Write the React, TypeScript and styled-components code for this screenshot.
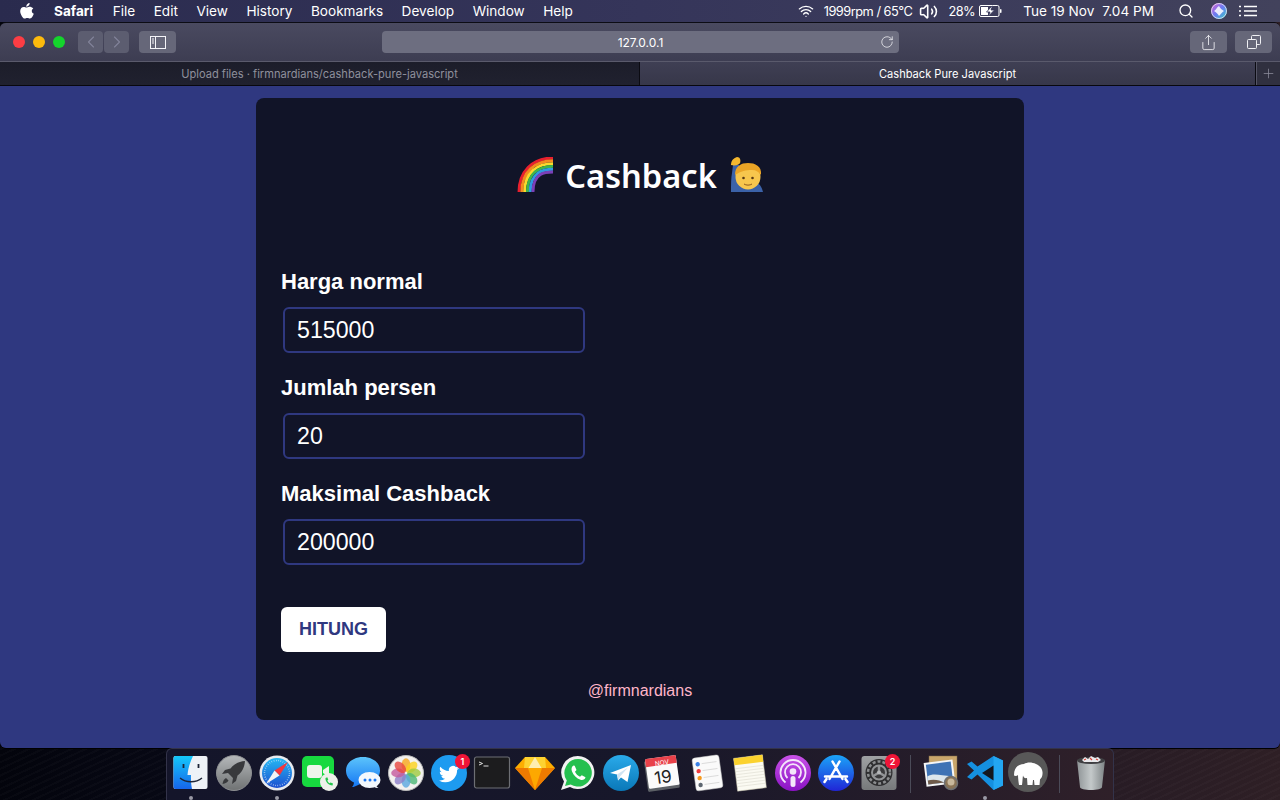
import React from "react";
import styled, { createGlobalStyle } from "styled-components";
import {
  ChevronLeft,
  ChevronRight,
  Plus,
  RotateCw,
  Search,
  Share,
  Volume2,
  Wifi,
} from "lucide-react";

const GlobalStyle = createGlobalStyle`
  html, body {
    margin: 0;
    padding: 0;
    background: #05060f;
  }
`;

const Screen = styled.div`
  width: 1280px;
  height: 800px;
  overflow: hidden;
  display: flex;
  flex-direction: column;
  font-family: Inter, "Liberation Sans", sans-serif;
  background:
    repeating-linear-gradient(155deg, rgba(255, 255, 255, 0.018) 0 2px, transparent 2px 6px),
    linear-gradient(90deg, #03040c 0%, #0b0c1c 25%, #1a1524 60%, #2e1f25 100%);
`;

const MenuBar = styled.header`
  height: 22px;
  flex: none;
  display: flex;
  align-items: center;
  justify-content: space-between;
  padding: 0 23px 0 20px;
  background: linear-gradient(90deg, #2a2b4e, #35355a 50%, #42425c);
  color: #fff;
  font-size: 13.6px;
`;

const MenuLeft = styled.nav`
  display: flex;
  align-items: center;
  gap: 18.5px;
`;

const MenuRight = styled.div`
  display: flex;
  align-items: center;
`;

const MenuItem = styled.span<{ $bold?: boolean; $left?: number }>`
  font-weight: ${({ $bold }) => ($bold ? 700 : 400)};
  margin-left: ${({ $left }) => $left ?? 0}px;
  white-space: nowrap;
`;

const StatusReading = styled(MenuItem)`
  font-size: 12.8px;
  letter-spacing: -0.5px;
`;

const AppleWrap = styled.span`
  display: flex;
  margin-right: 1.5px;
`;

const StatusSlot = styled.span<{ $left: number }>`
  display: flex;
  margin-left: ${({ $left }) => $left}px;
`;

const Window = styled.main`
  height: 726px;
  flex: none;
  display: flex;
  flex-direction: column;
  border-radius: 6px;
  overflow: hidden;
  border-top: 1px solid #0c0c14;
  box-sizing: border-box;
  box-shadow: 0 1px 0 #000;
`;

const Toolbar = styled.div`
  height: 38px;
  flex: none;
  display: flex;
  align-items: center;
  padding: 0 8px 0 13px;
  background: linear-gradient(#4a4a60, #3d3d52);
  border-bottom: 1px solid #5a5a6c;
`;

const Light = styled.span<{ $color: string }>`
  width: 12px;
  height: 12px;
  border-radius: 50%;
  background: ${({ $color }) => $color};
  margin-right: 8px;
`;

const ToolButton = styled.span<{ $width: number; $left: number }>`
  width: ${({ $width }) => $width}px;
  height: 22px;
  margin-left: ${({ $left }) => $left}px;
  flex: none;
  display: flex;
  align-items: center;
  justify-content: center;
  border-radius: 4px;
  background: #666779;
  color: #f0f0f4;
`;

const DimButton = styled(ToolButton)`
  background: #5c5d70;
  color: #83849a;
`;

const Address = styled.div`
  width: 517px;
  height: 22px;
  margin-left: 206px;
  flex: none;
  display: flex;
  align-items: center;
  justify-content: center;
  position: relative;
  border-radius: 4px;
  background: #6d6e80;
  color: #fff;
  font-size: 12px;
`;

const Reload = styled.span`
  position: absolute;
  right: 5px;
  top: 4px;
  display: flex;
  color: #f0f0f4;
`;

const TabStrip = styled.div`
  height: 24px;
  flex: none;
  display: flex;
  font-size: 11.1px;
  border-bottom: 1px solid #08080e;
  box-sizing: border-box;
`;

const Tab = styled.div<{ $active?: boolean }>`
  flex: none;
  width: ${({ $active }) => ($active ? 616 : 640)}px;
  display: flex;
  align-items: center;
  justify-content: center;
  box-sizing: border-box;
  color: ${({ $active }) => ($active ? "#fff" : "#8f909c")};
  background: ${({ $active }) => ($active ? "linear-gradient(#3f3f54, #373749)" : "linear-gradient(#1c1d2a, #20212f)")};
  border-right: 1px solid #0b0b12;
`;

const NewTab = styled.div`
  flex: 1;
  display: flex;
  align-items: center;
  justify-content: center;
  color: #8e8e9e;
  background: #30303f;
  border-left: 1px solid #555566;
`;

const Page = styled.section`
  flex: 1;
  display: flex;
  justify-content: center;
  padding-top: 12px;
  background: #2f3880;
`;

const Card = styled.div`
  width: 768px;
  height: 622px;
  box-sizing: border-box;
  padding: 49px 25px 0;
  border-radius: 8px;
  background: #111428;
  color: #fff;
  font-family: "Liberation Sans", Arial, sans-serif;
`;

const Title = styled.h1`
  margin: 0 0 64px;
  height: 56px;
  display: flex;
  align-items: center;
  justify-content: center;
  gap: 11px;
  font-family: "Noto Sans", sans-serif;
  font-size: 32.6px;
  font-weight: 600;
`;

const ManSlot = styled.span`
  display: flex;
  margin-left: 3px;
`;

const Field = styled.div`
  margin-bottom: 20px;
`;

const Label = styled.label`
  display: block;
  height: 28px;
  line-height: 30px;
  margin-bottom: 12px;
  font-size: 22px;
  font-weight: 700;
`;

const Input = styled.input`
  display: block;
  width: 302px;
  height: 46px;
  margin-left: 2px;
  padding: 0 12px;
  box-sizing: border-box;
  border: 2px solid #2f3880;
  border-radius: 6px;
  outline: none;
  background: transparent;
  color: #fff;
  font-family: "Liberation Sans", Arial, sans-serif;
  font-size: 23.2px;
`;

const SubmitButton = styled.button`
  display: block;
  width: 105px;
  height: 45px;
  margin-top: 42px;
  padding: 0;
  border: 0;
  border-radius: 6px;
  background: #fff;
  color: #2f3880;
  font-family: "Liberation Sans", Arial, sans-serif;
  font-size: 18px;
  font-weight: 700;
`;

const Credit = styled.div`
  margin-top: 29px;
  text-align: center;
  line-height: 20px;
  font-size: 16px;
  color: #ffb6c9;
`;

const DockArea = styled.footer`
  flex: 1;
  display: flex;
  justify-content: center;
`;

const Dock = styled.div`
  width: 948px;
  height: 52px;
  box-sizing: border-box;
  display: flex;
  gap: 7px;
  padding: 6px 5px 0 6px;
  border: 1px solid #33334a;
  border-bottom: 0;
  border-radius: 6px 6px 0 0;
  background: linear-gradient(90deg, #14152a, #17172a 50%, #2f2029);
`;

const DockSlot = styled.div`
  position: relative;
  width: 36px;
  height: 36px;
  flex: none;
  svg {
    display: block;
    overflow: visible;
  }
`;

const Badge = styled.span`
  position: absolute;
  top: -1px;
  right: -3px;
  width: 15px;
  height: 15px;
  border-radius: 50%;
  background: #f01437;
  color: #fff;
  font-size: 9px;
  font-weight: 600;
  line-height: 15px;
  text-align: center;
`;

const RunDot = styled.span`
  position: absolute;
  left: 16px;
  bottom: -9px;
  width: 4px;
  height: 4px;
  border-radius: 50%;
  background: #9a9aa6;
`;

const DockDivider = styled.span`
  width: 1px;
  height: 38px;
  margin: 0 6px;
  flex: none;
  background: #4b4b58;
`;

const AppleLogo = () => (
  <svg width="14" height="16" viewBox="0 0 14 16" fill="#fff">
    <path d="M9.600 0c.1 1-.3 1.900-.9 2.600-.6.700-1.500 1.200-2.400 1.100-.1-.9.300-1.900.9-2.500C7.800.500 8.800.100 9.600 0z" />
    <path d="M13.300 5.400c-.9.600-1.500 1.500-1.500 2.600 0 1.300.800 2.300 2 2.800-.3.900-.7 1.800-1.300 2.700-.7 1-1.500 2-2.600 2-1 0-1.400-.6-2.600-.6s-1.600.6-2.600.6c-1.100 0-1.900-1.100-2.700-2.100C.900 11.900.200 9.900.200 8.100c0-2.700 1.700-4.200 3.500-4.200 1.100 0 2 .7 2.700.7.700 0 1.700-.8 3-.8 1.400 0 2.900.6 3.900 1.600z" />
  </svg>
);

const BatteryIcon = () => (
  <svg width="23" height="12" viewBox="0 0 23 12" fill="none">
    <rect x="0.500" y="0.500" width="19.500" height="11" rx="1.500" stroke="#fff" />
    <rect x="2" y="2" width="7" height="8" fill="#fff" />
    <path d="M13 1 7.500 7h3.500l-1.500 4 6-6h-3.500l1.500-4z" fill="#fff" stroke="#35355a" strokeWidth="0.800" />
    <rect x="21" y="4" width="1.500" height="4" rx="0.700" fill="#fff" />
  </svg>
);

const SiriIcon = () => (
  <svg width="16" height="16" viewBox="0 0 16 16">
    <defs>
      <linearGradient id="siri" x1="0" y1="0" x2="1" y2="1">
        <stop offset="0" stopColor="#e25bd0" />
        <stop offset="0.500" stopColor="#6a7cf2" />
        <stop offset="1" stopColor="#35d0c0" />
      </linearGradient>
    </defs>
    <circle cx="8" cy="8" r="8" fill="url(#siri)" />
    <circle cx="8" cy="8" r="7.500" fill="none" stroke="#e8e8f0" strokeWidth="0.800" />
    <path d="M3 8c2-1 3-4 5-5 1 2 3 4 5 5-2 1-3 3-5 5-1-2-3-4-5-5z" fill="#fff" opacity="0.850" />
  </svg>
);

const ListIcon = () => (
  <svg width="18" height="12" viewBox="0 0 18 12" stroke="#fff" strokeWidth="1.500">
    <path d="M5 1.500h13M5 6h13M5 10.500h13M0 1.500h2M0 6h2M0 10.500h2" />
  </svg>
);

const SidebarGlyph = () => (
  <svg width="16" height="13" viewBox="0 0 16 13" fill="none" stroke="#f4f4f8">
    <rect x="0.500" y="0.500" width="15" height="12" />
    <path d="M5.500 0.500v12M2 3h2M2 5h2M2 7h2" />
  </svg>
);

const TabsGlyph = () => (
  <svg width="16" height="16" viewBox="0 0 16 16" fill="none" stroke="#f0f0f4">
    <rect x="1.500" y="5.500" width="9" height="9" rx="1" />
    <path d="M5.500 5.500v-3a1 1 0 0 1 1-1h7a1 1 0 0 1 1 1v7a1 1 0 0 1-1 1h-3" />
  </svg>
);

const RainbowEmoji = () => (
  <svg width="37" height="36" viewBox="0 0 37 36" fill="none" strokeWidth="2.900">
    {["#e8202e", "#f58a1f", "#fbd92c", "#3fb54a", "#2f9ae0", "#7b3fb8"].map((color, i) => {
      const r = 34 - i * 2.8;
      return <path key={color} d={`M${36 - r} 35C${36 - r} 15 ${36 - r + 13} ${35 - r} 36 ${35 - r}`} stroke={color} />;
    })}
  </svg>
);

const ManEmoji = () => (
  <svg width="32" height="36" viewBox="0 0 32 36">
    <path d="M0 35c0-8 0-14 1-19l1-8h6l1.500 10c4 6 12 7 16 8 4 1 5.500 5 6.500 9z" fill="#3b62a8" />
    <path d="M0 8C0 3 3 1 6 0c3 0 4 3 3 6-1 2-5 3-9 2z" fill="#f5b82e" />
    <circle cx="17" cy="20" r="12.500" fill="#f7c64d" />
    <path d="M4 18c0-9 6-12 13-12s14 3 13 12c-2-3-5-5-9-5-6 0-11 1-17 5z" fill="#eba526" />
    <circle cx="12.500" cy="21" r="1.300" fill="#5a3a14" />
    <circle cx="21.500" cy="21" r="1.300" fill="#5a3a14" />
    <path d="M13 27c2 1.500 6 1.500 8 0" stroke="#8f5a1c" strokeWidth="1" fill="none" />
  </svg>
);

const Icon = ({ children }: { children: React.ReactNode }) => (
  <svg width="36" height="36" viewBox="0 0 36 36">
    {children}
  </svg>
);

const FinderIcon = () => (
  <Icon>
    <defs>
      <linearGradient id="finderL" x1="0" y1="0" x2="0" y2="1">
        <stop offset="0" stopColor="#14c8fb" />
        <stop offset="1" stopColor="#1665ea" />
      </linearGradient>
    </defs>
    <rect x="0.500" y="1" width="34" height="33" rx="2" fill="#eef2f7" />
    <path d="M2.500 1H20c-3 6-5 13-5.500 19H18c-.2 4 0 9 1 14H2.500a2 2 0 0 1-2-2V3a2 2 0 0 1 2-2z" fill="url(#finderL)" />
    <path d="M10.500 9v4M25.500 9v4" stroke="#1c2436" strokeWidth="1.800" />
    <path d="M7 23c6 5 16 5 22 0" stroke="#1c2436" strokeWidth="1.300" fill="none" />
  </Icon>
);

const LaunchpadIcon = () => (
  <Icon>
    <defs>
      <linearGradient id="launch" x1="0" y1="0" x2="0" y2="1">
        <stop offset="0" stopColor="#b5b8ba" />
        <stop offset="1" stopColor="#6f7273" />
      </linearGradient>
    </defs>
    <circle cx="18" cy="18" r="17.500" fill="url(#launch)" stroke="#8d8f92" />
    <path d="M29 6c-6 .5-11 3-14.500 7.500L9 15l-3 4 6-1 5 5-1 6 4-3 1.500-5.500C26.500 17 28.500 12 29 6z" fill="#38393c" />
    <path d="M10 23c-2 1-3 3-3.500 6 3-.5 5-1.500 6-3.500z" fill="#38393c" />
  </Icon>
);

const SafariIcon = () => (
  <Icon>
    <defs>
      <linearGradient id="safari" x1="0" y1="0" x2="0" y2="1">
        <stop offset="0" stopColor="#25b8f3" />
        <stop offset="1" stopColor="#1c4fd0" />
      </linearGradient>
    </defs>
    <circle cx="18" cy="18" r="17.500" fill="#e8eaee" />
    <circle cx="18" cy="18" r="15" fill="url(#safari)" />
    <circle cx="18" cy="18" r="12.500" fill="none" stroke="#cfe3fa" strokeWidth="1.500" strokeDasharray="0.600 1.700" />
    <path d="M29 7 15.500 15.500l5 5z" fill="#f5373c" />
    <path d="M7 29 15.500 15.500l5 5z" fill="#f4f4f4" />
  </Icon>
);

const FaceTimeIcon = () => (
  <Icon>
    <rect x="0" y="1" width="32" height="31" rx="5" fill="#17d93f" />
    <rect x="5" y="10" width="15" height="13" rx="3" fill="#eef5ea" />
    <path d="m21 15 6-4v11l-6-4z" fill="#eef5ea" />
    <circle cx="27" cy="27" r="9" fill="#eef0ea" />
    <path d="M23.500 23c-.5 3 3 7.500 7 7.500l.5-2-2.500-1-1 .8c-1-.6-1.800-1.600-2.200-2.800l1-.8-1-2.500z" fill="#22c64a" />
  </Icon>
);

const MessagesIcon = () => (
  <Icon>
    <defs>
      <linearGradient id="messages" x1="0" y1="0" x2="0" y2="1">
        <stop offset="0" stopColor="#5cc4fb" />
        <stop offset="1" stopColor="#1577f4" />
      </linearGradient>
    </defs>
    <path d="M18 2c9.500 0 17 5.500 17 13.500 0 2-.5 3.500-1 5l-22 10c-1.500.8-3 1.500-5 1.500 1-1 1.800-2.500 2-4.500C3.500 25 1 20.500 1 15.500 1 7.500 8.500 2 18 2z" fill="url(#messages)" />
    <ellipse cx="24.500" cy="25" rx="11" ry="8" fill="#f3f8fd" />
    <path d="M31 30c.5 1.500 1.500 2.500 2.500 3-2 0-3.500-.5-5-1.500z" fill="#f3f8fd" />
    <circle cx="20" cy="25" r="1.500" fill="#1d78ef" />
    <circle cx="25" cy="25" r="1.500" fill="#1d78ef" />
    <circle cx="30" cy="25" r="1.500" fill="#1d78ef" />
  </Icon>
);

const PhotosIcon = () => (
  <Icon>
    <circle cx="18" cy="18" r="17.500" fill="#f3f1ef" stroke="#b9b9b9" />
    {["#f7a81b", "#fbd21c", "#9fcb3f", "#4bb874", "#5aa7e0", "#8d7fc9", "#c45a9e", "#e8473f"].map((color, i) => (
      <ellipse
        key={color}
        cx="18"
        cy="10"
        rx="4.400"
        ry="6.800"
        fill={color}
        opacity="0.800"
        transform={`rotate(${i * 45} 18 18)`}
      />
    ))}
  </Icon>
);

const TwitterIcon = () => (
  <Icon>
    <circle cx="18" cy="18" r="18" fill="#1d9bf0" />
    <g transform="translate(8 9) scale(0.840)">
      <path
        d="M23.953 4.570a10 10 0 01-2.825.775 4.958 4.958 0 002.163-2.723c-.951.555-2.005.959-3.127 1.184a4.920 4.920 0 00-8.384 4.482C7.690 8.095 4.067 6.130 1.640 3.162a4.822 4.822 0 00-.666 2.475c0 1.710.870 3.213 2.188 4.096a4.904 4.904 0 01-2.228-.616v.060a4.923 4.923 0 003.946 4.827 4.996 4.996 0 01-2.212.085 4.936 4.936 0 004.604 3.417 9.867 9.867 0 01-6.102 2.105c-.390 0-.779-.023-1.170-.067a13.995 13.995 0 007.557 2.209c9.053 0 13.998-7.496 13.998-13.985 0-.210 0-.420-.015-.630A9.935 9.935 0 0024 4.590z"
        fill="#fff"
      />
    </g>
  </Icon>
);

const TerminalIcon = () => (
  <Icon>
    <rect x="0.500" y="2" width="35" height="31" rx="2" fill="#1c1c1e" stroke="#6d6f74" strokeWidth="1.200" />
    <path d="m5 7 3.500 1.500L5 10" stroke="#f0f0f0" strokeWidth="0.900" fill="none" />
    <path d="M9.500 11h5" stroke="#f0f0f0" strokeWidth="0.900" />
  </Icon>
);

const SketchIcon = () => (
  <Icon>
    <path d="M8 2h20l10 11-20 22L-2 13z" fill="#fdad00" />
    <path d="M8 2h20l1 11H7z" fill="#fdd231" />
    <path d="M11.500 13 18 2l6.500 11z" fill="#feeeb0" />
    <path d="M-2 13H38L18 35z" fill="#ee7a00" />
    <path d="M11 13h14L18 35z" fill="#fda800" />
  </Icon>
);

const WhatsAppIcon = () => (
  <Icon>
    <path d="M18 1a16.500 16.500 0 1 1-8 31L1 35l3-8.500A16.500 16.500 0 0 1 18 1z" fill="#f2f2f2" />
    <path d="M18 4a13.800 13.800 0 1 1-7.300 25.500L5 31l1.800-5.500A13.800 13.800 0 0 1 18 4z" fill="#25c04f" />
    <path d="M13.500 10.500c-2 1.200-2.500 3.500-1.500 6 1.500 3.800 4.500 7 8.500 8.200 2.300.7 4.500-.3 5-2.500l-3.700-2-1.800 1.600c-2.300-1-4-2.800-5-5l1.500-1.800-1.800-4.200z" fill="#fff" />
  </Icon>
);

const TelegramIcon = () => (
  <Icon>
    <defs>
      <linearGradient id="telegram" x1="0" y1="0" x2="0" y2="1">
        <stop offset="0" stopColor="#2aaaea" />
        <stop offset="1" stopColor="#0a78b8" />
      </linearGradient>
    </defs>
    <circle cx="18" cy="18" r="18" fill="url(#telegram)" />
    <path d="M7 18 28 10l-3.500 17-6.500-4.500-3 3-1-6z" fill="#fff" />
    <path d="m14 19.500 11-7-8 9-1.500 4z" fill="#cfe3f2" />
  </Icon>
);

const CalendarIcon = () => (
  <Icon>
    <rect x="0" y="4" width="32" height="31" rx="1.500" fill="#5c6066" transform="rotate(-8 16 20)" />
    <g transform="rotate(-8 16 18)">
      <rect x="1" y="2" width="31" height="30" rx="1.500" fill="#fbfbfb" />
      <path d="M1 10V3.500A1.500 1.500 0 0 1 2.500 2h28A1.500 1.500 0 0 1 32 3.500V10z" fill="#e8414a" />
    </g>
    <text x="16" y="10" fontFamily="Inter, sans-serif" fontSize="6.500" fill="#fff" textAnchor="middle" transform="rotate(-8 16 8)">
      NOV
    </text>
    <text x="17" y="28" fontFamily="Inter, sans-serif" fontSize="17" fill="#222" textAnchor="middle" transform="rotate(-8 17 22)">
      19
    </text>
  </Icon>
);

const RemindersIcon = () => (
  <Icon>
    <g transform="rotate(-8 18 18)">
      <rect x="5" y="1.500" width="27" height="33" rx="2.500" fill="#fafafa" stroke="#c8c8c8" strokeWidth="0.500" />
      {["#3b82e8", "#f03c3c", "#f59a1f", "#5d6670"].map((color, i) => (
        <g key={color}>
          <circle cx="10" cy={8 + i * 7} r="2.200" fill={color} />
          <path d={`M14 ${8 + i * 7}h15`} stroke="#cfcfcf" strokeWidth="0.700" />
        </g>
      ))}
    </g>
  </Icon>
);

const NotesIcon = () => (
  <Icon>
    <g transform="rotate(-7 18 18)">
      <rect x="3.500" y="1.500" width="29" height="33" fill="#fbfaf2" stroke="#c4c0a8" strokeWidth="0.500" />
      <rect x="3.500" y="1.500" width="29" height="7" fill="#fbd22e" />
      {[12, 15, 18, 21, 24, 27, 30].map((y) => (
        <path key={y} d={`M4 ${y}h28`} stroke="#dedcd0" strokeWidth="0.600" />
      ))}
    </g>
  </Icon>
);

const PodcastsIcon = () => (
  <Icon>
    <defs>
      <linearGradient id="podcasts" x1="0" y1="0" x2="0" y2="1">
        <stop offset="0" stopColor="#c952e8" />
        <stop offset="1" stopColor="#8a12c4" />
      </linearGradient>
    </defs>
    <circle cx="18" cy="18" r="18" fill="url(#podcasts)" />
    <path d="M10.500 27.500a12.500 12.500 0 1 1 15 0" fill="none" stroke="#f4e6fa" strokeWidth="1.800" />
    <path d="M12.500 23a8 8 0 1 1 11 0" fill="none" stroke="#f4e6fa" strokeWidth="1.800" />
    <circle cx="18" cy="16.500" r="3.300" fill="#f4e6fa" />
    <rect x="15.500" y="21" width="5" height="11" rx="2.500" fill="#f4e6fa" />
  </Icon>
);

const AppStoreIcon = () => (
  <Icon>
    <defs>
      <linearGradient id="appstore" x1="0" y1="0" x2="0" y2="1">
        <stop offset="0" stopColor="#1ba4f8" />
        <stop offset="1" stopColor="#2025d6" />
      </linearGradient>
    </defs>
    <circle cx="18" cy="18" r="18" fill="url(#appstore)" />
    <path d="m21.500 6.500-10 17.500M14.500 6.500l10 17.500M7 21.500h22M6.500 27l2-3M29.500 27l-2-3" stroke="#fff" strokeWidth="2.500" strokeLinecap="round" fill="none" />
  </Icon>
);

const SystemPrefsIcon = () => (
  <Icon>
    <defs>
      <linearGradient id="prefs" x1="0" y1="0" x2="0" y2="1">
        <stop offset="0" stopColor="#9fa1a3" />
        <stop offset="1" stopColor="#77797b" />
      </linearGradient>
    </defs>
    <rect x="0.500" y="1" width="35" height="34" rx="3" fill="url(#prefs)" />
    <circle cx="18" cy="17.500" r="13.500" fill="#2e2e30" />
    <circle cx="18" cy="17.500" r="11" fill="none" stroke="#8b8d8f" strokeWidth="2.500" strokeDasharray="3 2" />
    <circle cx="18" cy="17.500" r="7" fill="#3a3a3c" stroke="#929496" strokeWidth="2" />
    <path d="M18 17.500V10M18 17.500l6.500 4M18 17.500l-6.500 4" stroke="#929496" strokeWidth="2.500" />
    <circle cx="18" cy="17.500" r="2" fill="#b4b6b8" />
  </Icon>
);

const PreviewIcon = () => (
  <Icon>
    <rect x="5" y="1" width="28" height="24" fill="#c9a66b" stroke="#7c6a48" strokeWidth="0.500" />
    <g transform="rotate(-7 16 18)">
      <rect x="1" y="6" width="29" height="24" fill="#f6f6f6" />
      <rect x="3" y="8" width="25" height="20" fill="#3f73b5" />
      <path d="M3 20c6-3 12 0 25 3v5H3z" fill="#dce6ec" />
      <path d="M3 24c6-1 12 1 16 4H3z" fill="#6f5b4a" />
    </g>
    <circle cx="27" cy="28" r="6.500" fill="#8a7456" stroke="#6f7072" strokeWidth="1.500" />
    <circle cx="27" cy="27" r="3.500" fill="#c8b89c" />
  </Icon>
);

const VSCodeIcon = () => (
  <Icon>
    <path d="M26.500 1 36 5.500v25L26.500 35 10.500 19.500l-6 5L0 22l7-6.500L0 9l4.500-2.500 6 5z" fill="#1590e0" />
    <path d="M26.500 1 36 5.500v25L26.500 35z" fill="#23a6f2" />
    <path d="M26.500 10.500 15 18l11.500 7.500z" fill="#14171f" />
  </Icon>
);

const MampIcon = () => (
  <Icon>
    <circle cx="18" cy="17" r="20" fill="#585858" />
    <path d="M4 20c0-8 5-11 10-11 3-2 8-2 12 0 5 2 7 6 6.500 10-.2 2.500-1 4-2.500 5.500l-.5 5.500h-5l-.5-5h-1l-.5 5h-5l-.5-7c-2 .5-3.500-.5-4-2.500-.5 3-.5 6-1 9.500H9c-.5-3.500-1-7-1-10-1.500 1.500-3 1-4 .500z" fill="#fff" />
  </Icon>
);

const TrashIcon = () => (
  <Icon>
    <defs>
      <linearGradient id="trash" x1="0" y1="0" x2="1" y2="0">
        <stop offset="0" stopColor="#8e9496" />
        <stop offset="0.500" stopColor="#c4c9ca" />
        <stop offset="1" stopColor="#7e8486" />
      </linearGradient>
    </defs>
    <path d="M4 5h28l-3 27c0 2-5 3-11 3S7 34 7 32z" fill="url(#trash)" />
    <ellipse cx="18" cy="5.500" rx="14" ry="3.500" fill="#3f3f42" />
    <path d="M9 5l3-3 3 2 3-3 4 2 3-1 3 3-3 2H11z" fill="#e9e9ec" />
    <path d="M11 5l2-1M17 3l2 2M23 4l2 1" stroke="#d3453c" strokeWidth="1.200" />
  </Icon>
);

type DockApp = {
  name: string;
  icon: React.ComponentType;
  badge?: number;
  running?: boolean;
  dividerAfter?: boolean;
};

const apps: DockApp[] = [
  { name: "Finder", icon: FinderIcon, running: true },
  { name: "Launchpad", icon: LaunchpadIcon },
  { name: "Safari", icon: SafariIcon, running: true },
  { name: "FaceTime", icon: FaceTimeIcon },
  { name: "Messages", icon: MessagesIcon },
  { name: "Photos", icon: PhotosIcon },
  { name: "Twitter", icon: TwitterIcon, badge: 1 },
  { name: "Terminal", icon: TerminalIcon },
  { name: "Sketch", icon: SketchIcon },
  { name: "WhatsApp", icon: WhatsAppIcon },
  { name: "Telegram", icon: TelegramIcon },
  { name: "Calendar", icon: CalendarIcon },
  { name: "Reminders", icon: RemindersIcon },
  { name: "Notes", icon: NotesIcon },
  { name: "Podcasts", icon: PodcastsIcon },
  { name: "App Store", icon: AppStoreIcon },
  { name: "System Preferences", icon: SystemPrefsIcon, badge: 2, dividerAfter: true },
  { name: "Preview", icon: PreviewIcon },
  { name: "VS Code", icon: VSCodeIcon, running: true },
  { name: "MAMP", icon: MampIcon, dividerAfter: true },
  { name: "Trash", icon: TrashIcon },
];

const menus = ["File", "Edit", "View", "History", "Bookmarks", "Develop", "Window", "Help"];

const fields = [
  { label: "Harga normal", value: "515000" },
  { label: "Jumlah persen", value: "20" },
  { label: "Maksimal Cashback", value: "200000" },
];

export default function App() {
  return (
    <Screen>
      <GlobalStyle />
      <MenuBar>
        <MenuLeft>
          <AppleWrap>
            <AppleLogo />
          </AppleWrap>
          <MenuItem $bold>Safari</MenuItem>
          {menus.map((menu, i) => (
            <MenuItem key={menu} $left={i === 0 ? 1 : 0}>
              {menu}
            </MenuItem>
          ))}
        </MenuLeft>
        <MenuRight>
          <Wifi size={16} color="#fff" />
          <StatusReading $left={10}>1999rpm / 65°C</StatusReading>
          <StatusSlot $left={7}>
            <Volume2 size={19} color="#fff" />
          </StatusSlot>
          <StatusReading $left={10}>28%</StatusReading>
          <StatusSlot $left={4}>
            <BatteryIcon />
          </StatusSlot>
          <MenuItem $left={21}>Tue 19 Nov</MenuItem>
          <MenuItem $left={8}>7.04 PM</MenuItem>
          <StatusSlot $left={24}>
            <Search size={16} color="#fff" />
          </StatusSlot>
          <StatusSlot $left={17}>
            <SiriIcon />
          </StatusSlot>
          <StatusSlot $left={12}>
            <ListIcon />
          </StatusSlot>
        </MenuRight>
      </MenuBar>

      <Window>
        <Toolbar>
          <Light $color="#fc3d44" />
          <Light $color="#fdba0c" />
          <Light $color="#14d42c" />
          <DimButton $width={25} $left={5}>
            <ChevronLeft size={20} strokeWidth={1.3} />
          </DimButton>
          <DimButton $width={25} $left={1}>
            <ChevronRight size={20} strokeWidth={1.3} />
          </DimButton>
          <ToolButton $width={37} $left={10}>
            <SidebarGlyph />
          </ToolButton>
          <Address>
            127.0.0.1
            <Reload>
              <RotateCw size={14} strokeWidth={1.3} />
            </Reload>
          </Address>
          <ToolButton $width={37} $left={291}>
            <Share size={17} strokeWidth={1.2} />
          </ToolButton>
          <ToolButton $width={37} $left={8}>
            <TabsGlyph />
          </ToolButton>
        </Toolbar>
        <TabStrip>
          <Tab>Upload files · firmnardians/cashback-pure-javascript</Tab>
          <Tab $active>Cashback Pure Javascript</Tab>
          <NewTab>
            <Plus size={15} strokeWidth={1.2} />
          </NewTab>
        </TabStrip>
        <Page>
          <Card>
            <Title>
              <RainbowEmoji />
              Cashback
              <ManSlot>
                <ManEmoji />
              </ManSlot>
            </Title>
            {fields.map((field) => (
              <Field key={field.label}>
                <Label>{field.label}</Label>
                <Input defaultValue={field.value} />
              </Field>
            ))}
            <SubmitButton>HITUNG</SubmitButton>
            <Credit>@firmnardians</Credit>
          </Card>
        </Page>
      </Window>

      <DockArea>
        <Dock>
          {apps.map((app) => (
            <React.Fragment key={app.name}>
              <DockSlot>
                <app.icon />
                {app.badge ? <Badge>{app.badge}</Badge> : null}
                {app.running ? <RunDot /> : null}
              </DockSlot>
              {app.dividerAfter ? <DockDivider /> : null}
            </React.Fragment>
          ))}
        </Dock>
      </DockArea>
    </Screen>
  );
}
